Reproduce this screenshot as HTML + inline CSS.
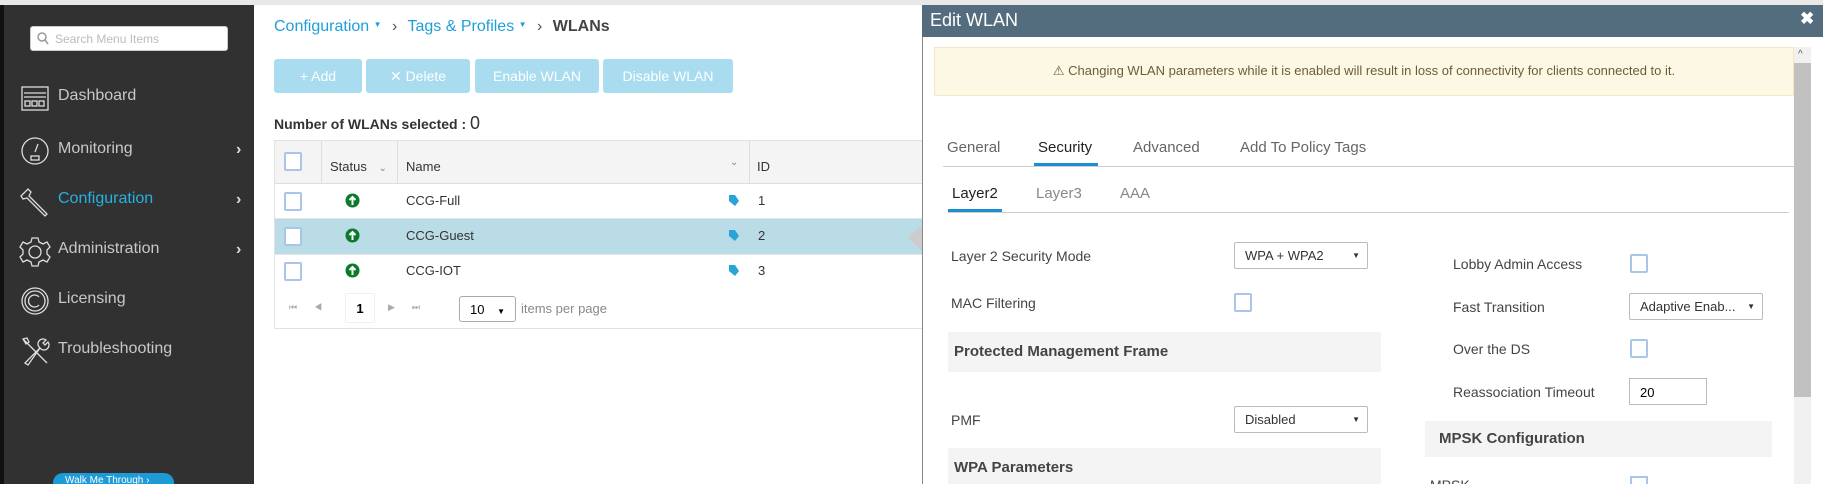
<!DOCTYPE html>
<html><head><meta charset="utf-8"><style>
*{box-sizing:border-box;margin:0;padding:0}
html,body{width:1823px;height:484px;overflow:hidden}
body{position:relative;background:#fff;font-family:"Liberation Sans",sans-serif;}
.a{position:absolute;white-space:nowrap}
.side{left:4px;top:5px;width:250px;height:479px;background:#313131}
.mi{color:#c8c8c8;font-size:16px;left:58px}
.chev{color:#ddd;font-size:16px;left:236px;font-weight:bold}
.btn{top:59px;height:34px;background:#a9dcef;color:#fff;font-size:14px;line-height:34px;text-align:center;border-radius:3px}
.cb{width:18px;height:19px;border:2px solid #a9c5ea;border-radius:2px;background:#fff}
.td{font-size:13px;color:#333}
.lbl{font-size:14px;color:#444}
.sel{height:27px;border:1px solid #bbb;border-radius:2px;background:#fff;font-size:13px;color:#333;padding:5px 0 0 10px}
.sel:after{content:"▼";position:absolute;right:7px;top:8px;font-size:8px}
.sec{background:#f4f4f4;font-weight:bold;font-size:15px;color:#444;padding-left:6px}
</style></head><body>
<div class="a" style="left:0;top:0;width:1823px;height:5px;background:#e8e8e8"></div>
<div class="a" style="left:0;top:5px;width:4px;height:479px;background:#111"></div>
<div class="a side"></div>
<div class="a" style="left:30px;top:26px;width:198px;height:25px;background:#fff;border-radius:3px;border:1px solid #ccc;font-size:12px;color:#bbb;padding:5px 0 0 24px">Search Menu Items</div>
<svg class="a" style="left:37px;top:32px" width="12" height="14"><circle cx="5" cy="5" r="4" fill="none" stroke="#999" stroke-width="1.5"/><line x1="8" y1="8" x2="11" y2="12" stroke="#999" stroke-width="1.5"/></svg>
<svg class="a" style="left:20px;top:84px" width="30" height="30" fill="none" stroke="#ddd" stroke-width="1.3"><rect x="2" y="3" width="26" height="23"/><line x1="4" y1="9" x2="26" y2="9"/><line x1="4" y1="13" x2="26" y2="13"/><rect x="5" y="17" width="5" height="5"/><rect x="12" y="17" width="5" height="5"/><rect x="19" y="17" width="5" height="5"/></svg>
<svg class="a" style="left:20px;top:136px" width="30" height="30" fill="none" stroke="#ddd" stroke-width="1.3"><circle cx="15" cy="15" r="13"/><line x1="15" y1="16" x2="18" y2="8"/><rect x="11" y="20" width="8" height="4"/></svg>
<svg class="a" style="left:19px;top:186px" width="32" height="32" fill="none" stroke="#ddd" stroke-width="1.3"><path d="M4 8 L9 3 L12 6 L10 10 L28 28 L26 30 L8 12 L4 13 L2 10 Z"/></svg>
<svg class="a" style="left:19px;top:236px" width="32" height="32" fill="none" stroke="#ddd" stroke-width="1.3"><circle cx="16" cy="16" r="6"/><path d="M13 2h6l1 4 4 2 4-2 3 5-3 3v4l3 3-3 5-4-2-4 2-1 4h-6l-1-4-4-2-4 2-3-5 3-3v-4l-3-3 3-5 4 2 4-2z"/></svg>
<svg class="a" style="left:20px;top:286px" width="30" height="30" fill="none" stroke="#ddd" stroke-width="1.3"><circle cx="15" cy="15" r="13"/><circle cx="15" cy="15" r="10"/><path d="M19 11 a6 6 0 1 0 0 8"/></svg>
<svg class="a" style="left:20px;top:336px" width="30" height="30" fill="none" stroke="#ddd" stroke-width="1.3"><path d="M3 3 L27 27 M5 27 L20 12 a5 5 0 0 1 6 -8 l-3 3 2 2 3 -3 a5 5 0 0 1 -8 6 L8 29 Z M3 3 l4 -1 2 4 -3 2 z"/></svg>
<div class="a mi" style="top:87px">Dashboard</div>
<div class="a mi" style="top:140px">Monitoring</div>
<div class="a mi" style="top:190px;color:#27b0e3">Configuration</div>
<div class="a mi" style="top:240px">Administration</div>
<div class="a mi" style="top:290px">Licensing</div>
<div class="a mi" style="top:340px">Troubleshooting</div>
<div class="a chev" style="top:141px">›</div>
<div class="a chev" style="top:191px">›</div>
<div class="a chev" style="top:241px">›</div>
<div class="a" style="left:53px;top:473px;width:121px;height:11px;overflow:hidden;background:#1e9bd7;border-radius:10px 10px 0 0;color:#fff;font-size:10px;padding:2px 0 0 12px">Walk Me Through ›</div>
<div class="a" style="left:274px;top:18px;font-size:16px;color:#1f9ed9">Configuration <span style="font-size:8px;vertical-align:4px">▼</span> <span style="color:#555;margin:0 6px">›</span> Tags &amp; Profiles <span style="font-size:8px;vertical-align:4px">▼</span> <span style="color:#555;margin:0 6px">›</span> <b style="color:#444">WLANs</b></div>
<div class="a btn" style="left:274px;width:88px">+ Add</div>
<div class="a btn" style="left:366px;width:104px">✕ Delete</div>
<div class="a btn" style="left:475px;width:124px">Enable WLAN</div>
<div class="a btn" style="left:603px;width:130px">Disable WLAN</div>
<div class="a" style="left:274px;top:113px;font-size:14px;color:#333;font-weight:bold">Number of WLANs selected : <span style="font-size:18px;font-weight:normal">0</span></div>
<div class="a" style="left:274px;top:140px;width:650px;height:189px;border:1px solid #e2e2e2"></div>
<div class="a" style="left:275px;top:141px;width:650px;height:43px;background:#f4f4f4;border-bottom:1px solid #ddd"></div>
<div class="a" style="left:321px;top:141px;width:1px;height:43px;background:#ddd"></div>
<div class="a" style="left:397px;top:141px;width:1px;height:43px;background:#ddd"></div>
<div class="a" style="left:749px;top:141px;width:1px;height:43px;background:#ddd"></div>
<div class="a cb" style="left:284px;top:152px"></div>
<div class="a td" style="left:330px;top:159px">Status <span style="font-size:10px;margin-left:8px;color:#888">⌄</span></div>
<div class="a td" style="left:406px;top:159px">Name</div>
<div class="a td" style="left:730px;top:157px;color:#888;font-size:10px">⌄</div>
<div class="a td" style="left:757px;top:159px">ID</div>
<div class="a" style="left:275px;top:219px;width:649px;height:35px;background:#b9dce6"></div>
<div class="a" style="left:275px;top:218px;width:649px;height:1px;background:#e5e5e5"></div>
<div class="a" style="left:275px;top:254px;width:649px;height:1px;background:#e5e5e5"></div>
<div class="a cb" style="left:284px;top:192px"></div>
<div class="a cb" style="left:284px;top:227px"></div>
<div class="a cb" style="left:284px;top:262px"></div>
<svg class="a" style="left:345px;top:193px" width="15" height="15"><circle cx="7.5" cy="7.5" r="7" fill="#0b7a2b"/><path d="M7.5 12V4M4.5 7l3-3 3 3" stroke="#fff" stroke-width="2" fill="none"/></svg>
<svg class="a" style="left:345px;top:228px" width="15" height="15"><circle cx="7.5" cy="7.5" r="7" fill="#0b7a2b"/><path d="M7.5 12V4M4.5 7l3-3 3 3" stroke="#fff" stroke-width="2" fill="none"/></svg>
<svg class="a" style="left:345px;top:263px" width="15" height="15"><circle cx="7.5" cy="7.5" r="7" fill="#0b7a2b"/><path d="M7.5 12V4M4.5 7l3-3 3 3" stroke="#fff" stroke-width="2" fill="none"/></svg>
<div class="a td" style="left:406px;top:193px">CCG-Full</div>
<div class="a td" style="left:406px;top:228px">CCG-Guest</div>
<div class="a td" style="left:406px;top:263px">CCG-IOT</div>
<svg class="a" style="left:728px;top:194px" width="12" height="13"><path d="M1 1h6l4 6-4 5L1 7z" fill="#2aa4d8"/></svg><div class="a td" style="left:758px;top:193px">1</div>
<svg class="a" style="left:728px;top:229px" width="12" height="13"><path d="M1 1h6l4 6-4 5L1 7z" fill="#2aa4d8"/></svg><div class="a td" style="left:758px;top:228px">2</div>
<svg class="a" style="left:728px;top:264px" width="12" height="13"><path d="M1 1h6l4 6-4 5L1 7z" fill="#2aa4d8"/></svg><div class="a td" style="left:758px;top:263px">3</div>
<div class="a" style="left:289px;top:302px;font-size:9px;color:#aaa;letter-spacing:17px">⏮◀</div>
<div class="a" style="left:345px;top:293px;width:30px;height:30px;border:1px solid #f0f0f0;font-size:13px;font-weight:bold;text-align:center;padding-top:7px">1</div>
<div class="a" style="left:388px;top:302px;font-size:9px;color:#aaa;letter-spacing:17px">▶⏭</div>
<div class="a" style="left:459px;top:296px;width:57px;height:26px;border:1px solid #aaa;border-radius:3px;font-size:13px;padding:5px 0 0 10px">10 <span style="font-size:8px;margin-left:9px">▼</span></div>
<div class="a" style="left:521px;top:301px;font-size:13px;color:#888">items per page</div>
<div class="a" style="left:908px;top:225px;width:0;height:0;border-top:13px solid transparent;border-bottom:13px solid transparent;border-right:14px solid #ccc"></div>
<div class="a" style="left:922px;top:5px;width:901px;height:479px;background:#fff;border-left:1px solid #888"></div>
<div class="a" style="left:922px;top:5px;width:901px;height:32px;background:#536c7e;color:#fff;font-size:18px;padding:5px 0 0 8px">Edit WLAN</div>
<div class="a" style="left:1800px;top:9px;color:#fff;font-size:17px;font-weight:bold">✖</div>
<div class="a" style="left:1794px;top:47px;width:17px;height:437px;background:#f1f1f1"></div>
<div class="a" style="left:1794px;top:63px;width:17px;height:334px;background:#c1c1c1"></div>
<div class="a" style="left:1798px;top:49px;font-size:10px;color:#555">^</div>
<div class="a" style="left:934px;top:47px;width:860px;height:49px;background:#fcf8e3;border:1px solid #f3e8c6;font-size:13px;color:#6b5d3a;text-align:center;padding-top:15px">⚠ Changing WLAN parameters while it is enabled will result in loss of connectivity for clients connected to it.</div>
<div class="a" style="left:943px;top:166px;width:851px;height:1px;background:#ccc"></div>
<div class="a" style="left:947px;top:139px;font-size:15px;color:#666">General</div>
<div class="a" style="left:1038px;top:139px;font-size:15px;color:#222">Security</div>
<div class="a" style="left:1133px;top:139px;font-size:15px;color:#666">Advanced</div>
<div class="a" style="left:1240px;top:139px;font-size:15px;color:#666">Add To Policy Tags</div>
<div class="a" style="left:1034px;top:163px;width:64px;height:3px;background:#1a8ed1"></div>
<div class="a" style="left:948px;top:212px;width:841px;height:1px;background:#ccc"></div>
<div class="a" style="left:952px;top:185px;font-size:15px;color:#222">Layer2</div>
<div class="a" style="left:1036px;top:185px;font-size:15px;color:#888">Layer3</div>
<div class="a" style="left:1120px;top:185px;font-size:15px;color:#888">AAA</div>
<div class="a" style="left:948px;top:209px;width:54px;height:3px;background:#1a8ed1"></div>
<div class="a lbl" style="left:951px;top:248px">Layer 2 Security Mode</div>
<div class="a sel" style="left:1234px;top:242px;width:134px">WPA + WPA2</div>
<div class="a lbl" style="left:951px;top:295px">MAC Filtering</div>
<div class="a cb" style="left:1234px;top:293px"></div>
<div class="a sec" style="left:948px;top:332px;width:433px;height:40px;padding-top:11px">Protected Management Frame</div>
<div class="a lbl" style="left:951px;top:412px">PMF</div>
<div class="a sel" style="left:1234px;top:406px;width:134px">Disabled</div>
<div class="a sec" style="left:948px;top:448px;width:433px;height:36px;padding-top:11px">WPA Parameters</div>
<div class="a lbl" style="left:1453px;top:256px">Lobby Admin Access</div>
<div class="a cb" style="left:1630px;top:254px"></div>
<div class="a lbl" style="left:1453px;top:299px">Fast Transition</div>
<div class="a sel" style="left:1629px;top:293px;width:134px">Adaptive Enab...</div>
<div class="a lbl" style="left:1453px;top:341px">Over the DS</div>
<div class="a cb" style="left:1630px;top:339px"></div>
<div class="a lbl" style="left:1453px;top:384px">Reassociation Timeout</div>
<div class="a" style="left:1629px;top:378px;width:78px;height:27px;border:1px solid #bbb;font-size:13px;padding:6px 0 0 10px">20</div>
<div class="a sec" style="left:1425px;top:421px;width:347px;height:36px;padding:9px 0 0 14px">MPSK Configuration</div>
<div class="a" style="left:1430px;top:477px;width:60px;height:7px;overflow:hidden"><div class="lbl">MPSK</div></div>
<div class="a" style="left:1630px;top:476px;width:18px;height:8px;border:2px solid #a9c5ea;border-bottom:none"></div>
</body></html>
